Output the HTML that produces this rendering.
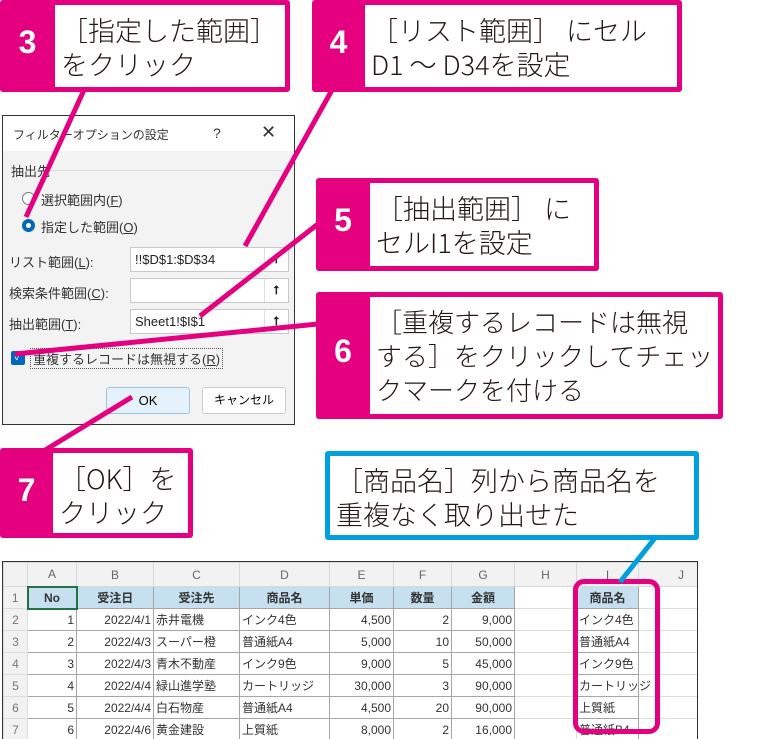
<!DOCTYPE html><html><head><meta charset="utf-8"><style>
*{margin:0;padding:0;box-sizing:border-box}
body{width:783px;height:739px;background:#fff;position:relative;overflow:hidden;font-family:"Liberation Sans","Noto Sans CJK JP",sans-serif}
.a{position:absolute}
.co{position:absolute;background:#e4007f;border-radius:3px}
.co .w{position:absolute;background:#fff;color:#231815;font-family:"Noto Sans CJK JP",sans-serif;font-weight:300;font-size:27px;line-height:34px;padding:8px 0 0 6px;white-space:nowrap}
.co .n{position:absolute;color:#fff;font-size:32px;font-weight:bold;text-align:center}
.dl{font-size:13px;color:#333}
.fld{position:absolute;background:#fff;border:1px solid #c8c8c8;height:25px;font-size:13px;line-height:23px;padding-left:4px;color:#222}
.up{position:absolute;right:0;top:0;width:24px;height:23px;border-left:1px solid #ddd;text-align:center;font-size:12px;font-weight:bold}
table{border-collapse:collapse;table-layout:fixed;font-size:12px;color:#333}
td{height:22px;border:1px solid #dcdcdc;padding:0 2px;white-space:nowrap;overflow:hidden}
.hd td{height:24px;background:#f2f2f2;color:#666;text-align:center;border-color:#d8d8d8}
td.rh{background:#f2f2f2;color:#777;text-align:center}
td.d{border-color:#a6a6a6}
td.h{background:#c6e0f0;font-weight:bold;text-align:center;border-color:#a6a6a6}
.r{text-align:right}
</style></head><body>

<!-- dialog -->
<div class="a" style="left:2px;top:115px;width:293px;height:310px;background:#f3f3f3;border:1px solid #333">
 <div class="a" style="left:0;top:0;width:291px;height:35px;background:#fff"></div>
 <div class="a dl" style="left:10px;top:10px;font-size:12px">フィルターオプションの設定</div>
 <div class="a dl" style="left:210px;top:9px;font-size:14px">?</div>
 <div class="a dl" style="left:258px;top:6px;font-size:18px">✕</div>
 <div class="a dl" style="left:8px;top:45px">抽出先</div>
 <div class="a" style="left:45px;top:54px;width:240px;height:1px;background:#ddd"></div>
 <div class="a" style="left:19px;top:76px;width:13px;height:13px;border:1px solid #777;border-radius:50%;background:#fff"></div>
 <div class="a dl" style="left:38px;top:74px">選択範囲内(<u>F</u>)</div>
 <div class="a" style="left:19px;top:103px;width:13px;height:13px;border:4px solid #0067c0;border-radius:50%;background:#fff"></div>
 <div class="a dl" style="left:38px;top:101px">指定した範囲(<u>O</u>)</div>
 <div class="a dl" style="left:6px;top:136px">リスト範囲(<u>L</u>):</div>
 <div class="fld" style="left:127px;top:131px;width:159px">!!$D$1:$D$34<div class="up">⭡</div></div>
 <div class="a dl" style="left:6px;top:167px">検索条件範囲(<u>C</u>):</div>
 <div class="fld" style="left:127px;top:162px;width:159px"><div class="up">⭡</div></div>
 <div class="a dl" style="left:6px;top:198px">抽出範囲(<u>T</u>):</div>
 <div class="fld" style="left:127px;top:193px;width:159px">Sheet1!$I$1<div class="up">⭡</div></div>
 <div class="a" style="left:8px;top:235px;width:14px;height:14px;background:#0067c0;border-radius:2px;color:#fff;font-size:10px;text-align:center;line-height:14px">✓</div>
 <div class="a dl" style="left:27px;top:232px;border:1px dotted #555;padding:0 2px">重複するレコードは無視する(<u>R</u>)</div>
 <div class="a" style="left:103px;top:271px;width:84px;height:27px;background:#e5f1fb;border:1px solid #9cc4e4;border-radius:3px;font-size:13px;text-align:center;line-height:25px">OK</div>
 <div class="a" style="left:199px;top:271px;width:84px;height:27px;background:#fff;border:1px solid #ccc;border-radius:3px;font-size:12px;text-align:center;line-height:25px">キャンセル</div>
</div>

<!-- callouts -->
<div class="co" style="left:0;top:0;width:290px;height:92px"><div class="n" style="left:0;top:24px;width:55px">3</div><div class="w" style="left:55px;top:5px;width:230px;height:82px">［指定した範囲］<br>をクリック</div></div>
<div class="co" style="left:312px;top:0;width:370px;height:92px"><div class="n" style="left:0;top:24px;width:53px">4</div><div class="w" style="left:53px;top:5px;width:312px;height:82px">［リスト範囲］ にセル<br>D1 ～ D34を設定</div></div>
<div class="co" style="left:316px;top:178px;width:283px;height:93px"><div class="n" style="left:0;top:24px;width:54px">5</div><div class="w" style="left:54px;top:5px;width:224px;height:83px">［抽出範囲］ に<br>セルI1を設定</div></div>
<div class="co" style="left:316px;top:292px;width:407px;height:127px"><div class="n" style="left:0;top:41px;width:54px">6</div><div class="w" style="left:54px;top:5px;width:348px;height:117px;font-size:26px">［重複するレコードは無視<br>する］をクリックしてチェッ<br>クマークを付ける</div></div>
<div class="co" style="left:0;top:448px;width:193px;height:90px"><div class="n" style="left:0;top:24px;width:53px">7</div><div class="w" style="left:53px;top:5px;width:135px;height:80px">［OK］を<br>クリック</div></div>
<div class="a" style="left:325px;top:451px;width:374px;height:89px;border:5px solid #00a0e0;border-radius:3px;background:#fff;font-family:'Noto Sans CJK JP',sans-serif;font-weight:300;font-size:27px;line-height:34px;padding:7px 0 0 6px;color:#231815;white-space:nowrap">［商品名］列から商品名を<br>重複なく取り出せた</div>

<!-- sheet -->
<div class="a" style="left:2px;top:561px;width:696px;height:178px;border:1px solid #333;border-bottom:none;overflow:hidden;background:#fff">
<table style="width:720px">
<colgroup><col style="width:24px"><col style="width:49px"><col style="width:77px"><col style="width:86px"><col style="width:90px"><col style="width:64px"><col style="width:58px"><col style="width:63px"><col style="width:62px"><col style="width:62px"><col style="width:85px"></colgroup>
<tr class="hd"><td></td><td>A</td><td>B</td><td>C</td><td>D</td><td>E</td><td>F</td><td>G</td><td>H</td><td>I</td><td>J</td></tr>
<tr><td class="rh">1</td><td class="h" style="border:2px solid #217346">No</td><td class="h">受注日</td><td class="h">受注先</td><td class="h">商品名</td><td class="h">単価</td><td class="h">数量</td><td class="h">金額</td><td></td><td class="h">商品名</td><td></td></tr>
<tr><td class="rh">2</td><td class="d r">1</td><td class="d r">2022/4/1</td><td class="d">赤井電機</td><td class="d">インク4色</td><td class="d r">4,500</td><td class="d r">2</td><td class="d r">9,000</td><td></td><td class="d">インク4色</td><td></td></tr>
<tr><td class="rh">3</td><td class="d r">2</td><td class="d r">2022/4/3</td><td class="d">スーパー橙</td><td class="d">普通紙A4</td><td class="d r">5,000</td><td class="d r">10</td><td class="d r">50,000</td><td></td><td class="d">普通紙A4</td><td></td></tr>
<tr><td class="rh">4</td><td class="d r">3</td><td class="d r">2022/4/3</td><td class="d">青木不動産</td><td class="d">インク9色</td><td class="d r">9,000</td><td class="d r">5</td><td class="d r">45,000</td><td></td><td class="d">インク9色</td><td></td></tr>
<tr><td class="rh">5</td><td class="d r">4</td><td class="d r">2022/4/4</td><td class="d">緑山進学塾</td><td class="d">カートリッジ</td><td class="d r">30,000</td><td class="d r">3</td><td class="d r">90,000</td><td></td><td class="d" style="overflow:visible">カートリッジ</td><td></td></tr>
<tr><td class="rh">6</td><td class="d r">5</td><td class="d r">2022/4/4</td><td class="d">白石物産</td><td class="d">普通紙A4</td><td class="d r">4,500</td><td class="d r">20</td><td class="d r">90,000</td><td></td><td class="d">上質紙</td><td></td></tr>
<tr><td class="rh">7</td><td class="d r">6</td><td class="d r">2022/4/6</td><td class="d">黄金建設</td><td class="d">上質紙</td><td class="d r">8,000</td><td class="d r">2</td><td class="d r">16,000</td><td></td><td class="d">普通紙B4</td><td></td></tr>
<tr><td class="rh">8</td><td class="d"></td><td class="d"></td><td class="d"></td><td class="d"></td><td class="d"></td><td class="d"></td><td class="d"></td><td></td><td></td><td></td></tr>
</table>
</div>
<div class="a" style="left:573px;top:579px;width:87px;height:155px;border:5px solid #e4007f;border-radius:11px"></div>

<!-- leader lines -->
<svg class="a" style="left:0;top:0" width="783" height="739">
<g stroke="#e4007f" stroke-width="5" stroke-linecap="butt">
<line x1="84" y1="90" x2="26" y2="217"/>
<line x1="332" y1="90" x2="245" y2="246"/>
<line x1="318" y1="224" x2="200" y2="316"/>
<line x1="318" y1="324" x2="15" y2="354"/>
<line x1="132" y1="397" x2="42" y2="452"/>
</g>
<line x1="655" y1="538" x2="620" y2="582" stroke="#00a0e0" stroke-width="5"/>
</svg>
</body></html>
